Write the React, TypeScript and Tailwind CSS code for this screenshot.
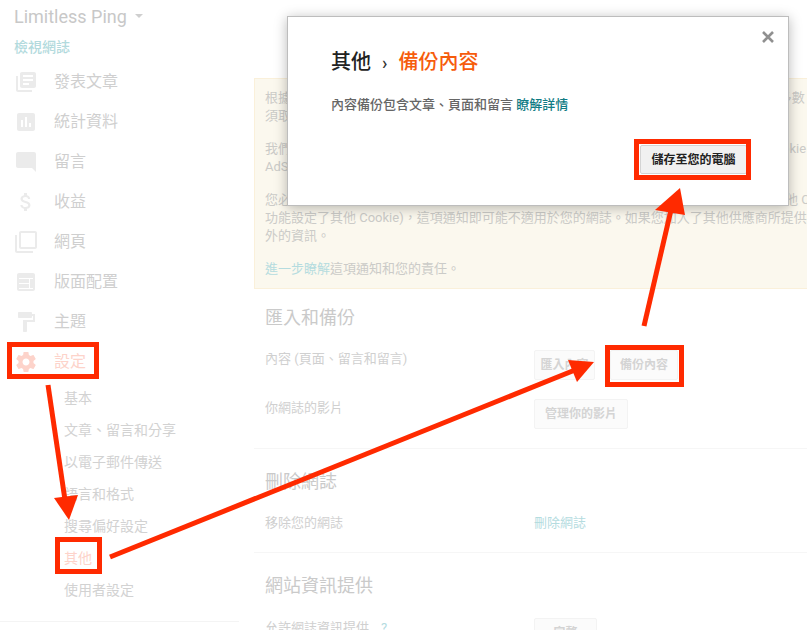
const font = '[font-family:Roboto,"Noto_Sans_CJK_TC",sans-serif]';

const icons: { label: string; d: string; active?: boolean }[] = [
  { label: "發表文章", d: "M4 6H2v14c0 1.1.9 2 2 2h14v-2H4V6zm16-4H8c-1.1 0-2 .9-2 2v12c0 1.1.9 2 2 2h12c1.1 0 2-.9 2-2V4c0-1.1-.9-2-2-2zm-1 9H9V9h10v2zm-4 4H9v-2h6v2zm4-8H9V5h10v2z" },
  { label: "統計資料", d: "M19 3H5c-1.1 0-2 .9-2 2v14c0 1.1.9 2 2 2h14c1.1 0 2-.9 2-2V5c0-1.1-.9-2-2-2zM9 17H7v-7h2v7zm4 0h-2V7h2v10zm4 0h-2v-4h2v4z" },
  { label: "留言", d: "M21.99 4c0-1.1-.89-2-1.99-2H4c-1.1 0-2 .9-2 2v12c0 1.1.9 2 2 2h14l4 4-.01-18z" },
  { label: "收益", d: "M11.8 10.9c-2.27-.59-3-1.2-3-2.15 0-1.09 1.01-1.85 2.7-1.85 1.78 0 2.44.85 2.5 2.1h2.21c-.07-1.72-1.12-3.3-3.21-3.81V3h-3v2.16c-1.94.42-3.5 1.68-3.5 3.61 0 2.31 1.91 3.46 4.7 4.13 2.5.6 3 1.48 3 2.41 0 .69-.49 1.79-2.7 1.79-2.06 0-2.87-.92-2.98-2.1h-2.2c.12 2.19 1.76 3.42 3.68 3.83V21h3v-2.15c1.95-.37 3.5-1.5 3.5-3.55 0-2.84-2.43-3.81-4.7-4.4z" },
  { label: "網頁", d: "M3 5H1v16c0 1.1.9 2 2 2h16v-2H3V5zm18-4H7c-1.1 0-2 .9-2 2v14c0 1.1.9 2 2 2h14c1.1 0 2-.9 2-2V3c0-1.1-.9-2-2-2zm0 16H7V3h14v14z" },
  { label: "版面配置", d: "M19 3H5c-1.1 0-2 .9-2 2v14c0 1.1.9 2 2 2h14c1.1 0 2-.9 2-2V5c0-1.1-.9-2-2-2zM5 8h14v1H5V8zm0 5h10v1H5v-1zm0 5h14v1H5v-1zM15 9h1v9h-1V9z" },
  { label: "主題", d: "M18 4V3c0-.55-.45-1-1-1H5c-.55 0-1 .45-1 1v4c0 .55.45 1 1 1h12c.55 0 1-.45 1-1V6h1v4H9v11c0 .55.45 1 1 1h2c.55 0 1-.45 1-1v-9h8V4h-3z" },
  { label: "設定", active: true, d: "M19.43 12.98c.04-.32.07-.64.07-.98s-.03-.66-.07-.98l2.11-1.65c.19-.15.24-.42.12-.64l-2-3.46c-.12-.22-.39-.3-.61-.22l-2.49 1c-.52-.4-1.08-.73-1.69-.98l-.38-2.65C14.46 2.18 14.25 2 14 2h-4c-.25 0-.46.18-.49.42l-.38 2.65c-.61.25-1.17.59-1.69.98l-2.49-1c-.23-.09-.49 0-.61.22l-2 3.46c-.13.22-.07.49.12.64l2.11 1.65c-.04.32-.07.65-.07.98s.03.66.07.98l-2.11 1.65c-.19.15-.24.42-.12.64l2 3.46c.12.22.39.3.61.22l2.49-1c.52.4 1.08.73 1.69.98l.38 2.65c.03.24.24.42.49.42h4c.25 0 .46-.18.49-.42l.38-2.65c.61-.25 1.17-.59 1.69-.98l2.49 1c.23.09.49 0 .61-.22l2-3.46c.12-.22.07-.49-.12-.64l-2.11-1.65zM12 15.5c-1.93 0-3.5-1.57-3.5-3.5s1.57-3.5 3.5-3.5 3.5 1.57 3.5 3.5-1.57 3.5-3.5 3.5z" },
];

const subs = ["基本", "文章、留言和分享", "以電子郵件傳送", "語言和格式", "搜尋偏好設定", "其他", "使用者設定"];

function Sidebar() {
  return (
    <aside className="w-[239px] shrink-0 h-[630px] pl-[14px] flex flex-col">
      <div className="h-[32px] flex items-center text-[18px] text-[#c8c8c8] gap-[8px]">
        Limitless Ping
        <span className="w-0 h-0 border-x-[4px] border-x-transparent border-t-[4px] border-t-[#cfcfcf]" />
      </div>
      <div className="h-[30px] flex items-center text-[14px] font-medium text-[#b2dadd]">檢視網誌</div>
      {icons.map((i) => (
        <div key={i.label} className="h-10 flex items-center gap-4">
          <svg viewBox="0 0 24 24" className="w-6 h-6 shrink-0" fill={i.active ? "#fdd3ca" : "#ebebeb"} fillRule="evenodd">
            <path d={i.d} />
          </svg>
          <span className={`text-[16px] ${i.active ? "text-[#fdd3ca]" : "text-[#cfcfcf]"}`}>{i.label}</span>
        </div>
      ))}
      <div className="pl-[50px]">
        {subs.map((s) => (
          <div key={s} className={`h-8 flex items-center text-[14px] ${s === "其他" ? "text-[#fdd3ca]" : "text-[#d2d2d2]"}`}>{s}</div>
        ))}
      </div>
      <div className="mt-[15px] -ml-[14px] border-t border-[#f4f4f4]" />
    </aside>
  );
}

const Btn = ({ children, w }: { children: string; w: string }) => (
  <div className={`${w} h-[30px] flex items-center justify-center bg-[#fbfbfb] border border-[#f3f3f3] rounded-[2px] text-[12px] font-bold text-[#d4d4d4]`}>{children}</div>
);

const Heading = ({ children }: { children: string }) => (
  <div className="text-[18px] leading-[24px] text-[#cacaca] pl-[11px]">{children}</div>
);

function Row({ label, children, cls }: { label: React.ReactNode; children: React.ReactNode; cls: string }) {
  return (
    <div className={`flex pl-[11px] ${cls}`}>
      <div className="w-[269px] text-[13px] leading-[18px] text-[#d0d0d0]">{label}</div>
      <div className="flex gap-[15px]">{children}</div>
    </div>
  );
}

function Notice() {
  const paragraphs = [
    ["根據歐盟法律規定，您必須告知歐盟境內的訪客您在自己的網誌上使用了\u2009 Cookie，而且在多數", "須取得訪客同意"],
    ["我們已在您的網誌上新增通知，說明 Google 使用特定 Blogger 和 Google Cookie，包括 Cookie", "AdSense Cookie"],
    ["您必須確認這項通知確實適用於您的網誌。如果您的網誌使用了其他廠商的功能或新增了其他 C", "功能設定了其他 Cookie)，這項通知即可能不適用於您的網誌。如果您加入了其他供應商所提供", "外的資訊。"],
  ];
  return (
    <div className="mt-[78px] h-[211px] bg-[#fbf8ee] border border-[#faf0da] border-r-0 pl-[10px] pt-[10px] text-[13px] leading-[18px] text-[#cbcbc8] whitespace-nowrap overflow-hidden">
      {paragraphs.map((p, i) => (
        <div key={i} className="mb-[15px]">
          {p.map((l) => (
            <div key={l}>{l}</div>
          ))}
        </div>
      ))}
      <div><span className="text-[#b5dcdf]">進一步瞭解</span>這項通知和您的責任。</div>
    </div>
  );
}

function Main() {
  return (
    <main className="flex-1 min-w-0 ml-[15px]">
      <Notice />
      <div className="mt-[17px]"><Heading>匯入和備份</Heading></div>
      <Row label="內容 (頁面、留言和留言)" cls="mt-[20px]">
        <Btn w="w-[61px]">匯入內容</Btn>
        <Btn w="w-[68px]">備份內容</Btn>
      </Row>
      <Row label="你網誌的影片" cls="mt-[19px]">
        <Btn w="w-[94px]">管理你的影片</Btn>
      </Row>
      <div className="mt-[19px] border-t border-[#f6f6f6]" />
      <div className="mt-[21px]"><Heading>刪除網誌</Heading></div>
      <Row label="移除您的網誌" cls="mt-[20px]">
        <span className="text-[13px] leading-[18px] text-[#b5dcdf]">刪除網誌</span>
      </Row>
      <div className="mt-[20px] border-t border-[#f6f6f6]" />
      <div className="mt-[21px]"><Heading>網站資訊提供</Heading></div>
      <Row label={<span>允許網誌資訊提供<span className="ml-3 text-[#b5dcdf]">?</span></span>} cls="mt-[21px]">
        <Btn w="w-[63px] -mt-[1px]">完整</Btn>
      </Row>
    </main>
  );
}

function Modal() {
  return (
    <div className="absolute left-[287px] top-[16px] w-[502px] h-[190px] bg-white border border-[#bdbdbd] shadow-[0_2px_12px_rgba(0,0,0,0.28)]">
      <div className="absolute right-[14px] top-[14px]">
        <svg viewBox="0 0 12 12" className="w-[12px] h-[12px]" stroke="#909090" strokeWidth="2.6"><path d="M1 1l10 10M11 1L1 11" /></svg>
      </div>
      <div className="pl-[43px] pt-[30px] flex items-center h-[60px] text-[20px] font-medium">
        <span className="text-[#222]">其他</span>
        <span className="mx-[11px] text-[#333] text-[18px]">›</span>
        <span className="text-[#f65c0c]">備份內容</span>
      </div>
      <div className="pl-[43px] mt-[19px] text-[13px] leading-[18px] font-medium text-[#666]">
        內容備份包含文章、頁面和留言 <span className="text-[#117c84]">瞭解詳情</span>
      </div>
      <div className="flex justify-end pr-[41px] mt-[31px]">
        <div className="w-[107px] h-[29px] flex items-center justify-center bg-[#f1f1f1] border border-[#d4d4d4] rounded-[2px] text-[12px] font-bold text-[#222]">儲存至您的電腦</div>
      </div>
    </div>
  );
}

function Annotations() {
  const R = "#ff2a00";
  return (
    <>
      <div className="absolute left-[7px] top-[342px] w-[92px] h-[37px] border-[5px] border-[#ff2a00]" />
      <div className="absolute left-[55px] top-[537px] w-[47px] h-[37px] border-[5px] border-[#ff2a00]" />
      <div className="absolute left-[605px] top-[345px] w-[79px] h-[42px] border-[5px] border-[#ff2a00]" />
      <div className="absolute left-[634px] top-[139px] w-[117px] h-[41px] border-[5px] border-[#ff2a00]" />
      <svg className="absolute left-0 top-0 w-[807px] h-[630px] pointer-events-none" viewBox="0 0 807 630">
        <line x1="48" y1="385" x2="65" y2="500" stroke={R} strokeWidth="5" />
        <polygon points="69,520 54,498 78,495" fill={R} />
        <line x1="110" y1="557" x2="575" y2="370" stroke={R} strokeWidth="5" />
        <polygon points="594,362 568,360 577,382" fill={R} />
        <line x1="644" y1="326" x2="671" y2="210" stroke={R} strokeWidth="5" />
        <polygon points="680,188 655,210 685,215" fill={R} />
      </svg>
    </>
  );
}

export default function App() {
  return (
    <div className={`relative w-[807px] h-[630px] overflow-hidden bg-white flex ${font}`}>
      <Sidebar />
      <Main />
      <Modal />
      <Annotations />
    </div>
  );
}
